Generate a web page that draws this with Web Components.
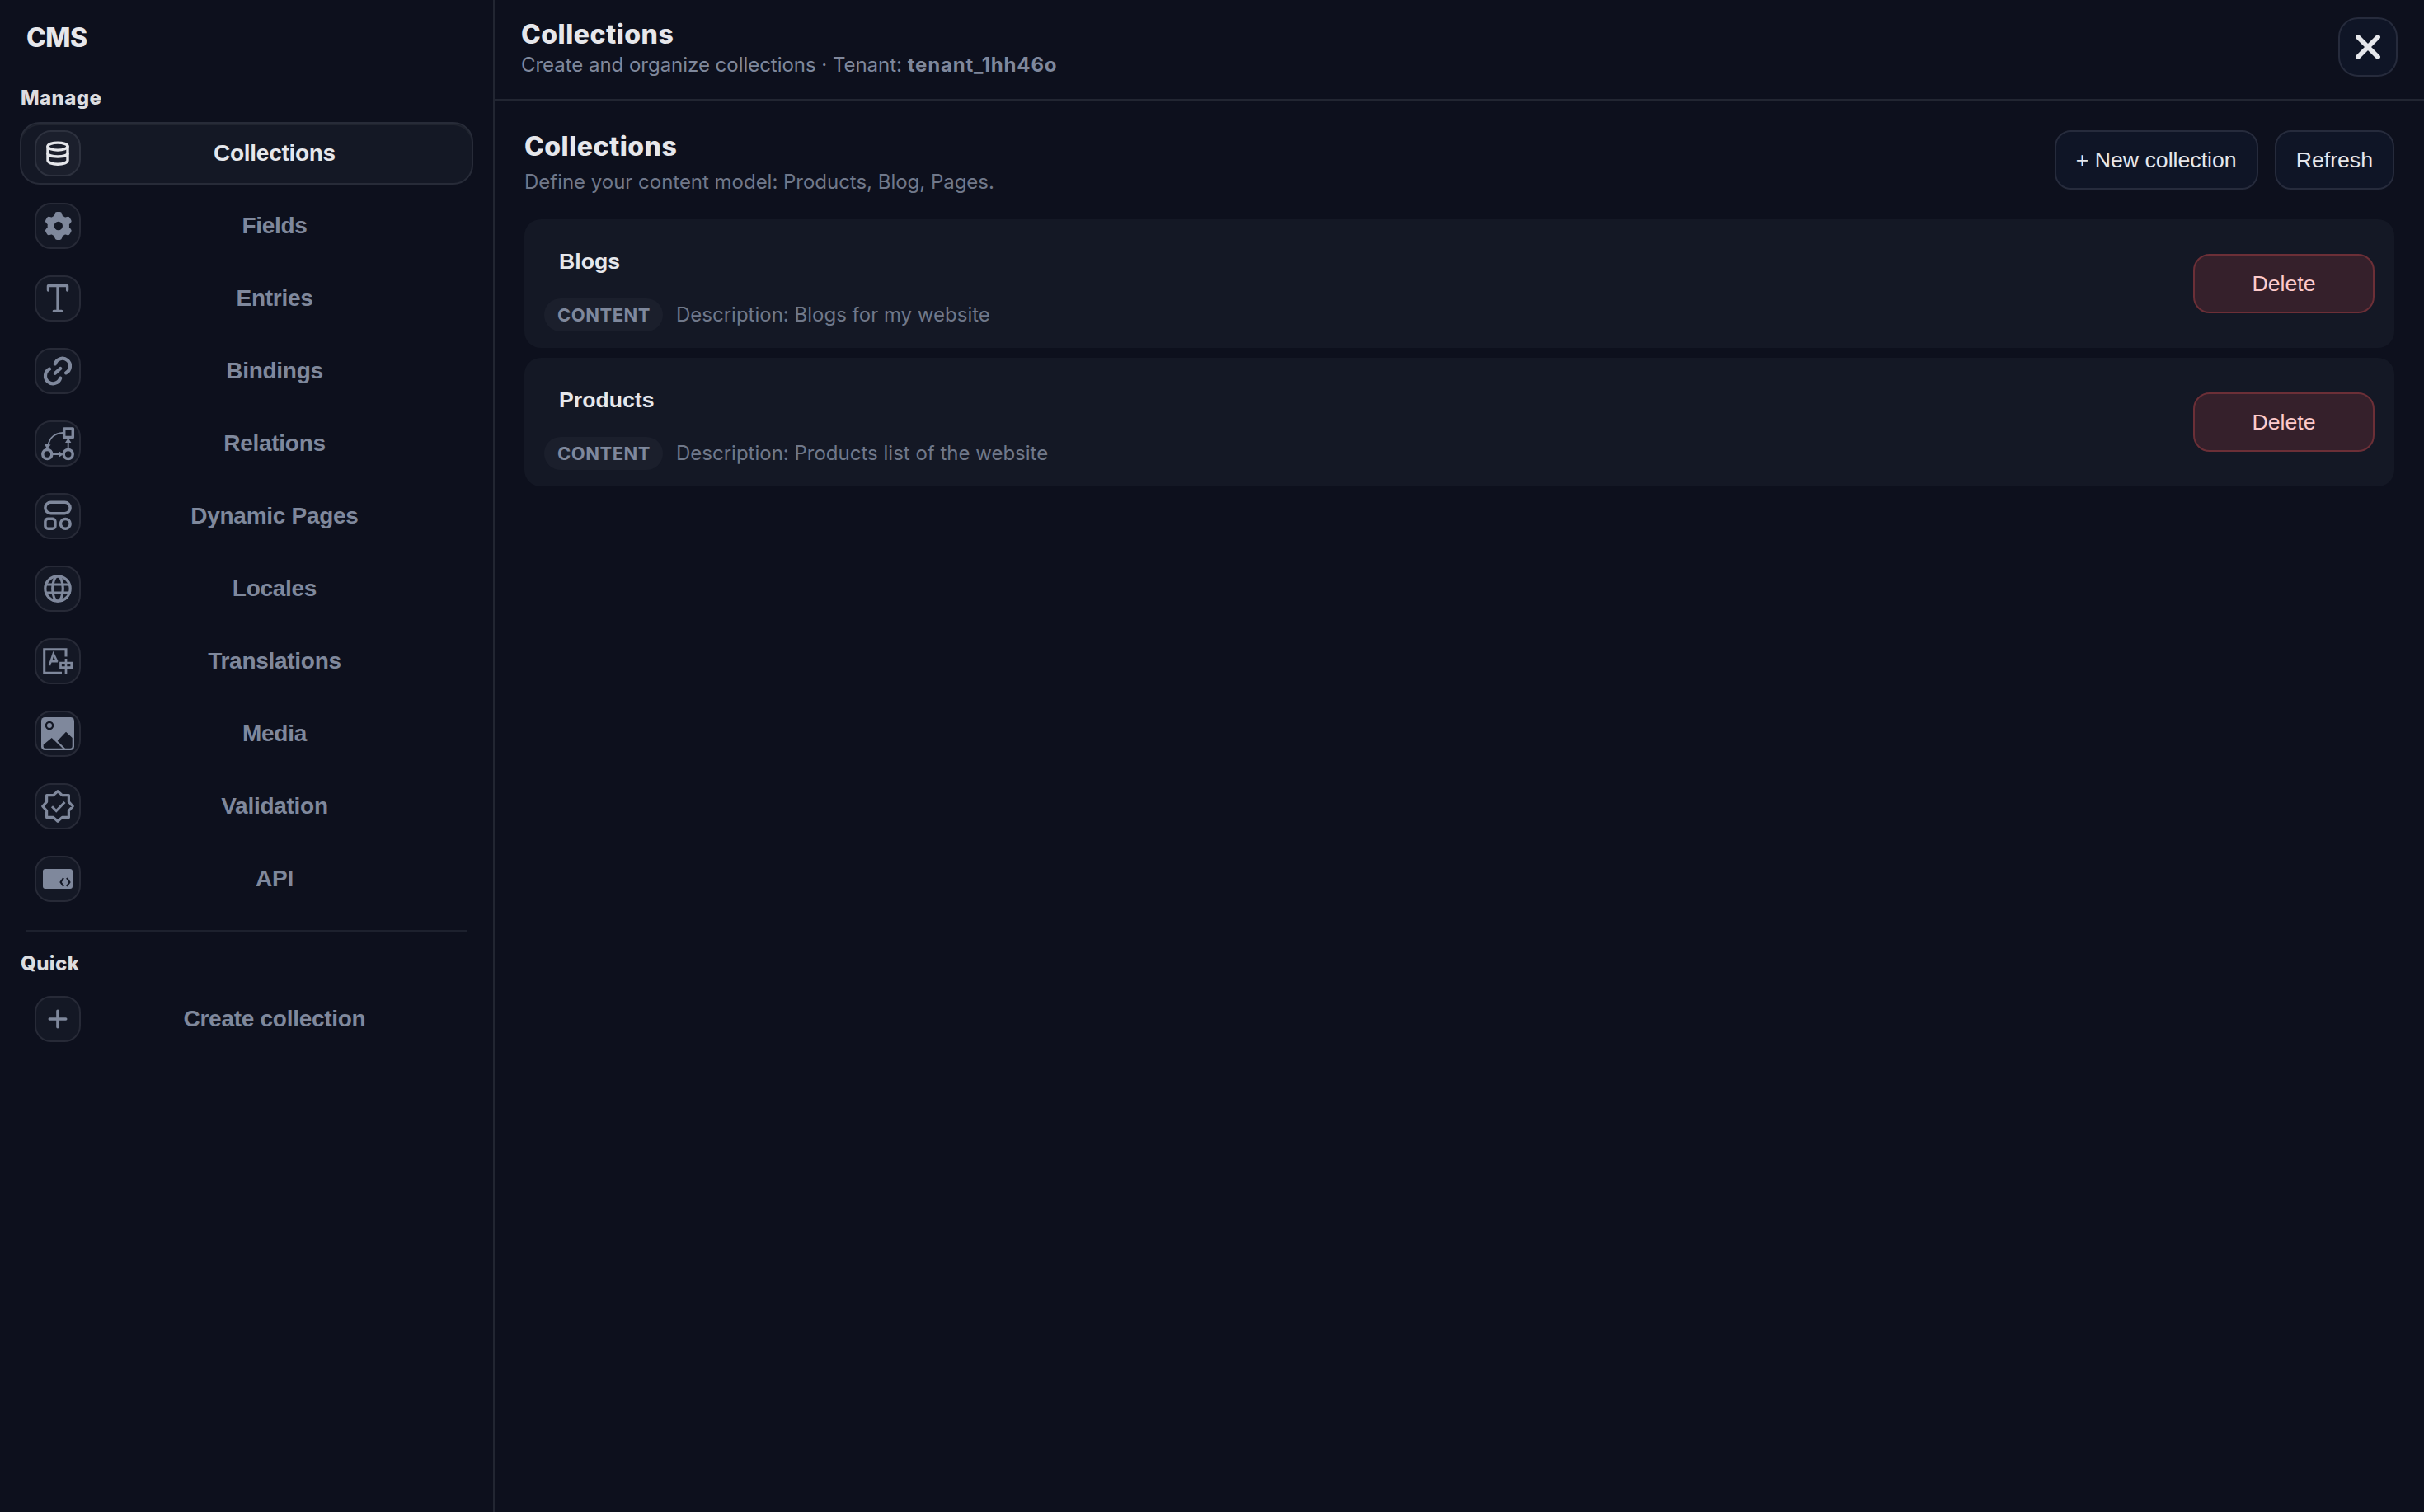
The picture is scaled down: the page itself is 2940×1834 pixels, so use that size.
<!DOCTYPE html>
<html lang="en">
<head>
<meta charset="utf-8">
<title>CMS</title>
<style>
  :root {
    --bg: #0d101d;
    --line: #222632;
    --card: #141825;
    --chip: #1b1f2c;
    --text: #e6e7eb;
    --muted: #7f889c;
    --dim: #70788a;
    --font-ui: Inter, "Noto Sans", sans-serif;
    --font-control: "Liberation Sans", Arial, sans-serif;
  }

  body {
    margin: 0;
    background: var(--bg);
    color: var(--text);
    font-family: var(--font-ui);
  }
</style>
</head>
<body>
<cms-app></cms-app>

<script>
const gearTooth = (angle) =>
  `<path transform="rotate(${angle} 28.8 28)" d="M22.8 20l1.6-6.500q.5-2.400 2.600-2.400h3.600q2.100 0 2.600 2.400L34.800 20z"/>`;

// Drawn on the 56px grid of the rounded icon box
const ICONS = {
  database: `
    <g stroke-width="3.4"><ellipse cx="28" cy="19.6" rx="12" ry="4.5"/>
    <path d="M16 19.6v17c0 2.6 5.4 4.700 12 4.700s12-2.100 12-4.700v-17"/>
    <path d="M16 28c0 2.400 5.400 4 12 4s12-1.600 12-4"/></g>`,
  gear: `
    <circle cx="28.8" cy="28" r="9.2" stroke-width="8"/>
    <g fill="currentColor" stroke="none">${[0, 60, 120, 180, 240, 300].map(gearTooth).join("")}</g>`,
  type: `<path stroke-width="3.3" d="M16.400 18v-5.300h23.200V18M28 12.700v30.600M23.300 43.300h9.400"/>`,
  link: `<path stroke-width="4.2" d="M24.800 19.400A9.300 9.300 0 1 1 38 30.300M31.200 36.600A9.300 9.300 0 1 1 18 25.700M24.800 30.800l6.400-5.800"/>`,
  relations: `
    <g stroke-width="3.5"><rect x="35.7" y="10" width="10.6" height="10.6"/>
    <circle cx="15.3" cy="41" r="5.500"/><circle cx="40.7" cy="41" r="5.500"/></g>
    <path stroke-width="1.9" d="M22 41h9M40.700 34v-8M34 15c-9 .5-16 5.500-17.500 15"/>
    <path fill="currentColor" stroke="none" d="M29.300 37.300l5.700 3.700-5.700 3.700zM37 27l3.700-5.700 3.700 5.700zM12 28.500l7.500 1-4.500 5.300z"/>`,
  layout: `
    <g stroke-width="3.5"><rect x="12.9" y="11.3" width="30.2" height="13.4" rx="6.7"/>
    <rect x="12.9" y="31.3" width="12" height="12" rx="3.3"/><circle cx="37.3" cy="37.3" r="5.900"/></g>`,
  globe: `
    <g stroke-width="3.2"><circle cx="28" cy="28" r="15.200"/><ellipse cx="28" cy="28" rx="6.3" ry="15.2"/>
    <path d="M13.700 23h28.600M13.700 33h28.600"/></g>`,
  translate: `
    <g stroke-linecap="butt" stroke-linejoin="miter"><path stroke-width="3" d="M38 22.500v-8.800H11.700v28.600H33"/>
    <path stroke-width="2.5" d="M18 33l4.700-14 4.800 9.700M20.300 28.200h7.700"/>
    <path stroke-width="2.7" d="M31.500 30h13.200v5.700H31.500zM38 25v18.700"/></g>`,
  image: `
    <rect x="8" y="8" width="40" height="40" rx="4.5" fill="currentColor" stroke="none"/>
    <circle cx="18" cy="18" r="4.1" stroke="var(--card)" stroke-width="2.3"/>
    <path fill="var(--card)" stroke="none" d="M10.700 41.300L20.700 33 34 45.700H13q-2.300 0-2.300-2zM27.700 36.700l10.300-11 7.700 7.300v10q0 2.700-2.700 2.700h-6z"/>`,
  badge: `
    <path stroke-width="3.2" d="M28 9.700l5.400 4.900h8v8l4.900 5.400-4.900 5.400v8h-8L28 46.300l-5.400-4.900h-8v-8L9.700 28l4.900-5.400v-8h8z"/>
    <path stroke-width="2.9" stroke-linecap="butt" stroke-linejoin="miter" d="M21 28.300l5.200 5.300 10.300-10.600"/>`,
  api: `
    <rect x="10" y="16" width="36" height="24" rx="3" fill="currentColor" stroke="none"/>
    <path stroke="var(--card)" stroke-width="2.2" stroke-linecap="butt" stroke-linejoin="miter" d="M35 27l-3.400 5 3.400 5M39 27l3.400 5-3.400 5"/>`,
  plus: `<path stroke-width="3.6" d="M28 18.300v19.400M18.300 28h19.400"/>`,
  close: `<path stroke-width="5.8" d="M16 16l24 24M40 16L16 40"/>`
};

class CmsIcon extends HTMLElement {
  constructor() {
    super();
    this.attachShadow({ mode: "open" });
  }

  connectedCallback() {
    this.shadowRoot.innerHTML = /* html */`
    <style>
      :host { display: block; width: 56px; height: 56px; flex: none; }
      svg { display: block; width: 100%; height: 100%; }
    </style>
    <svg viewBox="0 0 56 56" fill="none" stroke="currentColor" stroke-linecap="round" stroke-linejoin="round">${ICONS[this.getAttribute("name")]}</svg>`;
  }
}

class NavItem extends HTMLElement {
  constructor() {
    super();
    this.attachShadow({ mode: "open" });
  }

  static get styles() {
    return /* css */`
      :host {
        display: flex;
        align-items: center;
        gap: 12px;
        box-sizing: border-box;
        height: 76px;
        padding: 0 16px;
        border: 2px solid transparent;
        border-radius: 24px;
        color: var(--muted);
        cursor: pointer;
      }

      :host([active]) {
        color: var(--text);
        background: var(--card);
        border-color: #272b38;
        box-shadow: inset 0 2px 0 #20242f;
      }

      .icon {
        display: flex;
        box-sizing: border-box;
        width: 56px;
        height: 56px;
        border: 2px solid #272a37;
        border-radius: 20px;
        background: var(--card);
      }

      .icon cms-icon {
        margin: -2px;
      }

      :host([active]) .icon {
        background: var(--chip);
        border-color: #2d313e;
      }

      .label {
        flex: 1;
        text-align: center;
        font: 700 28px/32px var(--font-control);
        letter-spacing: -0.28px;
      }
    `;
  }

  connectedCallback() {
    this.shadowRoot.innerHTML = /* html */`
    <style>${NavItem.styles}</style>
    <div class="icon"><cms-icon name="${this.getAttribute("icon")}"></cms-icon></div>
    <div class="label"><slot></slot></div>`;
  }
}

class CmsButton extends HTMLElement {
  constructor() {
    super();
    this.attachShadow({ mode: "open" });
  }

  static get styles() {
    return /* css */`
      :host {
        display: flex;
        flex: none;
      }

      button {
        display: flex;
        align-items: center;
        justify-content: center;
        height: 72px;
        padding: 0 24px;
        border: 2px solid #262b3c;
        border-radius: 20px;
        background: #0f1526;
        color: var(--text);
        font: 400 26.667px/32px var(--font-control);
        cursor: pointer;
      }

      :host([variant="danger"]) button {
        width: 220px;
        border-color: #6c2f37;
        background: #35202b;
        color: #fecaca;
      }

      :host([variant="icon"]) button {
        width: 72px;
        padding: 0;
        border-radius: 24px;
      }
    `;
  }

  connectedCallback() {
    this.shadowRoot.innerHTML = /* html */`
    <style>${CmsButton.styles}</style>
    <button type="button"><slot></slot></button>`;
  }
}

class CmsSidebar extends HTMLElement {
  constructor() {
    super();
    this.attachShadow({ mode: "open" });
  }

  static get styles() {
    return /* css */`
      :host {
        display: block;
        box-sizing: border-box;
        width: 600px;
        padding: 26px 24px 0;
        border-right: 2px solid var(--line);
      }

      .brand {
        padding-left: 8px;
        margin-bottom: 38px;
        font-size: 32px;
        font-weight: 800;
        line-height: 40px;
        letter-spacing: -0.5px;
      }

      .heading {
        padding-left: 1px;
        margin-bottom: 14px;
        color: #dcdde0;
        font-size: 24px;
        font-weight: 800;
        line-height: 30px;
        letter-spacing: 0.4px;
      }

      nav {
        display: flex;
        flex-direction: column;
        gap: 12px;
      }

      hr {
        height: 2px;
        margin: 24px 8px;
        border: 0;
        background: #1d212e;
      }
    `;
  }

  connectedCallback() {
    this.shadowRoot.innerHTML = /* html */`
    <style>${CmsSidebar.styles}</style>
    <div class="brand">CMS</div>
    <div class="heading">Manage</div>
    <nav>
      <nav-item icon="database" active>Collections</nav-item>
      <nav-item icon="gear">Fields</nav-item>
      <nav-item icon="type">Entries</nav-item>
      <nav-item icon="link">Bindings</nav-item>
      <nav-item icon="relations">Relations</nav-item>
      <nav-item icon="layout">Dynamic Pages</nav-item>
      <nav-item icon="globe">Locales</nav-item>
      <nav-item icon="translate">Translations</nav-item>
      <nav-item icon="image">Media</nav-item>
      <nav-item icon="badge">Validation</nav-item>
      <nav-item icon="api">API</nav-item>
    </nav>
    <hr>
    <div class="heading">Quick</div>
    <nav>
      <nav-item icon="plus">Create collection</nav-item>
    </nav>`;
  }
}

class CmsTopbar extends HTMLElement {
  constructor() {
    super();
    this.attachShadow({ mode: "open" });
  }

  static get styles() {
    return /* css */`
      :host {
        display: flex;
        align-items: flex-start;
        justify-content: space-between;
        box-sizing: border-box;
        height: 122px;
        padding: 21px 32px 0;
        border-bottom: 2px solid var(--line);
      }

      .titles {
        display: flex;
        flex-direction: column;
        gap: 4px;
        padding-top: 3px;
      }

      .title {
        font-size: 32px;
        font-weight: 800;
        line-height: 36px;
        letter-spacing: 0.5px;
      }

      .sub {
        color: var(--muted);
        font-size: 24px;
        line-height: 30px;
        letter-spacing: -0.03px;
      }

      .sub b {
        font-weight: 700;
        letter-spacing: 0.82px;
      }
    `;
  }

  connectedCallback() {
    this.shadowRoot.innerHTML = /* html */`
    <style>${CmsTopbar.styles}</style>
    <div class="titles">
      <div class="title">Collections</div>
      <div class="sub">Create and organize collections · Tenant: <b>tenant_1hh46o</b></div>
    </div>
    <cms-button variant="icon" aria-label="Close"><cms-icon name="close"></cms-icon></cms-button>`;
  }
}

class CollectionCard extends HTMLElement {
  constructor() {
    super();
    this.attachShadow({ mode: "open" });
  }

  static get styles() {
    return /* css */`
      :host {
        display: flex;
        align-items: center;
        justify-content: space-between;
        height: 156px;
        padding: 0 24px;
        border-radius: 20px;
        background: var(--card);
      }

      .info {
        display: flex;
        flex-direction: column;
        gap: 29px;
        padding-top: 15px;
      }

      .name {
        padding-left: 18px;
        font: 700 26.667px/32px var(--font-control);
      }

      .meta {
        display: flex;
        align-items: center;
        gap: 16px;
      }

      .kind {
        box-sizing: border-box;
        width: 144px;
        padding-left: 1px;
        border-radius: 20px;
        background: var(--chip);
        color: var(--muted);
        font-size: 22px;
        font-weight: 700;
        line-height: 40px;
        letter-spacing: 0.5px;
        text-align: center;
      }

      .desc {
        color: var(--dim);
        font-size: 24px;
        line-height: 38px;
      }
    `;
  }

  connectedCallback() {
    this.shadowRoot.innerHTML = /* html */`
    <style>${CollectionCard.styles}</style>
    <div class="info">
      <div class="name">${this.getAttribute("name")}</div>
      <div class="meta">
        <span class="kind">CONTENT</span>
        <span class="desc">Description: <slot></slot></span>
      </div>
    </div>
    <cms-button variant="danger">Delete</cms-button>`;
  }
}

class CollectionsPanel extends HTMLElement {
  constructor() {
    super();
    this.attachShadow({ mode: "open" });
  }

  static get styles() {
    return /* css */`
      :host {
        display: block;
        padding: 36px;
      }

      header {
        display: flex;
        align-items: flex-start;
        justify-content: space-between;
        margin-bottom: 30px;
      }

      .titles {
        display: flex;
        flex-direction: column;
        gap: 10px;
        padding-top: 2px;
      }

      .title {
        font-size: 32px;
        font-weight: 800;
        line-height: 36px;
        letter-spacing: 0.5px;
      }

      .sub {
        color: var(--dim);
        font-size: 24px;
        line-height: 30px;
        letter-spacing: -0.02px;
      }

      .actions {
        display: flex;
        gap: 20px;
      }

      .list {
        display: flex;
        flex-direction: column;
        gap: 12px;
      }
    `;
  }

  connectedCallback() {
    this.shadowRoot.innerHTML = /* html */`
    <style>${CollectionsPanel.styles}</style>
    <header>
      <div class="titles">
        <div class="title">Collections</div>
        <div class="sub">Define your content model: Products, Blog, Pages.</div>
      </div>
      <div class="actions">
        <cms-button>+ New collection</cms-button>
        <cms-button>Refresh</cms-button>
      </div>
    </header>
    <div class="list">
      <collection-card name="Blogs">Blogs for my website</collection-card>
      <collection-card name="Products">Products list of the website</collection-card>
    </div>`;
  }
}

class CmsApp extends HTMLElement {
  constructor() {
    super();
    this.attachShadow({ mode: "open" });
  }

  connectedCallback() {
    this.shadowRoot.innerHTML = /* html */`
    <style>
      :host {
        display: grid;
        grid-template-columns: 600px 1fr;
        height: 100vh;
        overflow: hidden;
      }
    </style>
    <cms-sidebar></cms-sidebar>
    <main>
      <cms-topbar></cms-topbar>
      <collections-panel></collections-panel>
    </main>`;
  }
}

customElements.define("cms-icon", CmsIcon);
customElements.define("nav-item", NavItem);
customElements.define("cms-button", CmsButton);
customElements.define("cms-sidebar", CmsSidebar);
customElements.define("cms-topbar", CmsTopbar);
customElements.define("collection-card", CollectionCard);
customElements.define("collections-panel", CollectionsPanel);
customElements.define("cms-app", CmsApp);
</script>
</body>
</html>
